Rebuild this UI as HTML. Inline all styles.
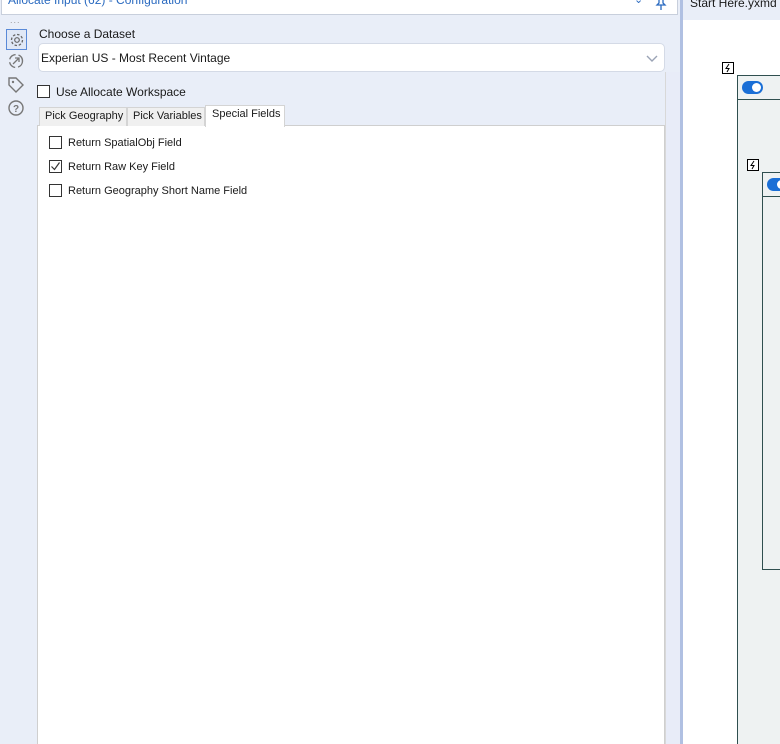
<!DOCTYPE html>
<html><head><style>
*{box-sizing:border-box;margin:0;padding:0}
html,body{width:780px;height:744px;overflow:hidden}
body{background:#e9eef8;font-family:"Liberation Sans",sans-serif;font-size:12px;color:#1a1a1a;position:relative}
.a{position:absolute}
.cb{position:absolute;width:13px;height:13px;border:1px solid #333;background:#fff}
.t{position:absolute;font-size:11px;white-space:nowrap}
</style></head><body>
<div class="a" style="left:1px;top:-2px;width:677px;height:17px;background:#fff;border:1px solid #c8cfdc;border-top:none"></div>
<div class="t" style="left:8px;top:-7px;color:#2a6ac0;font-size:12px">Allocate Input (62) - Configuration</div>
<div class="t" style="left:634px;top:-7px;color:#2a6ac0">⌄</div>
<svg class="a" style="left:654px;top:-2px" width="14" height="12"><path d="M3 0h8M5 0v5l-2 2h8l-2-2V0M7 7v5" stroke="#2a6ac0" fill="none" stroke-width="1.3"/></svg>
<div class="t" style="left:10px;top:15px;color:#999;font-size:9px;letter-spacing:1px">...</div>
<div class="a" style="left:6px;top:29px;width:21px;height:21px;border:1px solid #5a8ad8;background:#e0e8f6"></div>
<svg class="a" style="left:7px;top:30px" width="20" height="20"><circle cx="10" cy="10" r="5.5" fill="none" stroke="#666" stroke-width="1.3" stroke-dasharray="2.5 1.8"/><circle cx="10" cy="10" r="2.3" fill="none" stroke="#666" stroke-width="1.2"/></svg>
<svg class="a" style="left:7px;top:52px" width="18" height="18"><circle cx="9" cy="9" r="6.5" fill="none" stroke="#777" stroke-width="1.4" stroke-dasharray="8 3"/><path d="M6 12l6-6M8 6h4v4" stroke="#777" fill="none" stroke-width="1.3"/></svg>
<svg class="a" style="left:7px;top:76px" width="18" height="18"><path d="M2 2h7l7 7-7 7-7-7z" fill="none" stroke="#777" stroke-width="1.4"/><circle cx="6" cy="6" r="1.2" fill="#777"/></svg>
<svg class="a" style="left:7px;top:99px" width="18" height="18"><circle cx="9" cy="9" r="7" fill="none" stroke="#777" stroke-width="1.4"/><text x="9" y="13" font-size="10" font-weight="bold" text-anchor="middle" fill="#777" font-family="Liberation Sans">?</text></svg>
<div class="t" style="left:39px;top:27px;font-size:12px">Choose a Dataset</div>
<div class="a" style="left:38px;top:43px;width:627px;height:29px;background:#fff;border:1px solid #d4dae6;border-radius:5px"></div>
<div class="t" style="left:41px;top:51px;font-size:12px">Experian US - Most Recent Vintage</div>
<svg class="a" style="left:646px;top:55px" width="12" height="8"><path d="M1 1l5 5 5-5" stroke="#9aa3b5" fill="none" stroke-width="1.4"/></svg>
<div class="cb" style="left:37px;top:85px"></div>
<div class="t" style="left:56px;top:85px;font-size:12px">Use Allocate Workspace</div>
<div class="a" style="left:37px;top:125px;width:628px;height:619px;background:#fff;border:1px solid #cfcfcf;border-bottom:none"></div>
<div class="a" style="left:39px;top:107px;width:88px;height:19px;background:#f0f0f0;border:1px solid #d4d4d4;border-bottom:none"></div>
<div class="t" style="left:45px;top:110px">Pick Geography</div>
<div class="a" style="left:127px;top:107px;width:78px;height:19px;background:#f0f0f0;border:1px solid #d4d4d4;border-bottom:none"></div>
<div class="t" style="left:133px;top:110px">Pick Variables</div>
<div class="a" style="left:205px;top:105px;width:80px;height:22px;background:#fff;border:1px solid #d4d4d4;border-bottom:none"></div>
<div class="t" style="left:212px;top:108px">Special Fields</div>
<div class="cb" style="left:49px;top:136px"></div>
<div class="t" style="left:68px;top:137px">Return SpatialObj Field</div>
<div class="cb" style="left:49px;top:160px"></div>
<svg class="a" style="left:50px;top:161px" width="11" height="11"><path d="M1.5 5.5l3 3 5-7" stroke="#333" fill="none" stroke-width="1.2"/></svg>
<div class="t" style="left:68px;top:161px">Return Raw Key Field</div>
<div class="cb" style="left:49px;top:184px"></div>
<div class="t" style="left:68px;top:185px">Return Geography Short Name Field</div>
<div class="a" style="left:665px;top:72px;width:15px;height:672px;background:#e8ecf8;border-left:1px solid #d8d8d8"></div>
<div class="a" style="left:680px;top:0;width:3px;height:744px;background:#b0c0e2"></div>
<div class="a" style="left:683px;top:0;width:97px;height:20px;background:#e9eef8"></div>
<div class="t" style="left:690px;top:-4px;font-size:12px">Start Here.yxmd</div>
<div class="a" style="left:683px;top:20px;width:97px;height:724px;background:#fff"></div>
<svg class="a" style="left:722px;top:62px" width="12" height="12"><rect x="0.5" y="0.5" width="11" height="11" fill="#fff" stroke="#000"/><path d="M7 2L4 6.5h3L5 10" stroke="#000" fill="none" stroke-width="1"/></svg>
<div class="a" style="left:737px;top:75px;width:50px;height:680px;background:#eef2f2;border:1px solid #2f4f4f"></div>
<div class="a" style="left:737px;top:99px;width:50px;height:1px;background:#2f4f4f"></div>
<div class="a" style="left:742px;top:81px;width:21px;height:13px;border-radius:7px;background:#1a6fd6"></div>
<div class="a" style="left:752px;top:83px;width:9px;height:9px;border-radius:5px;background:#fff"></div>
<svg class="a" style="left:747px;top:159px" width="12" height="12"><rect x="0.5" y="0.5" width="11" height="11" fill="#fff" stroke="#000"/><path d="M7 2L4 6.5h3L5 10" stroke="#000" fill="none" stroke-width="1"/></svg>
<div class="a" style="left:762px;top:172px;width:30px;height:398px;background:#eef2f2;border:1px solid #2f4f4f"></div>
<div class="a" style="left:762px;top:196px;width:30px;height:1px;background:#2f4f4f"></div>
<div class="a" style="left:767px;top:178px;width:21px;height:13px;border-radius:7px;background:#1a6fd6"></div>
<div class="a" style="left:777px;top:180px;width:9px;height:9px;border-radius:5px;background:#fff"></div>
</body></html>
